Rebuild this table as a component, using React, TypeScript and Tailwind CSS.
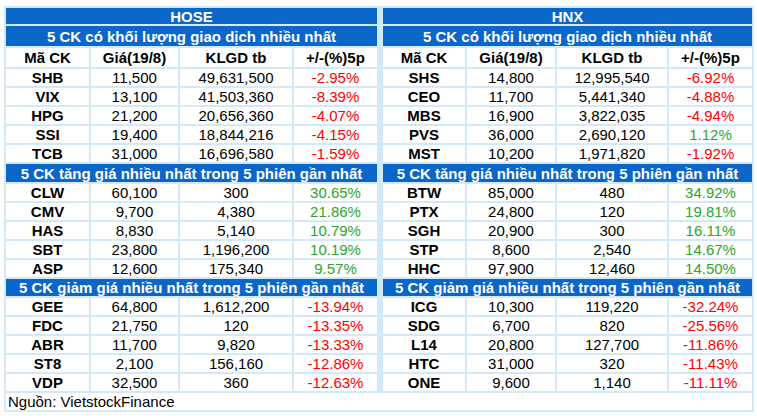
import React from "react";

type Row = [string, string, string, string];

const BLUE = "bg-[#0a66c8]";

const hose = {
  name: "HOSE",
  s1: [
    ["SHB", "11,500", "49,631,500", "-2.95%"],
    ["VIX", "13,100", "41,503,360", "-8.39%"],
    ["HPG", "21,200", "20,656,360", "-4.07%"],
    ["SSI", "19,400", "18,844,216", "-4.15%"],
    ["TCB", "31,000", "16,696,580", "-1.59%"],
  ] as Row[],
  s2: [
    ["CLW", "60,100", "300", "30.65%"],
    ["CMV", "9,700", "4,380", "21.86%"],
    ["HAS", "8,830", "5,140", "10.79%"],
    ["SBT", "23,800", "1,196,200", "10.19%"],
    ["ASP", "12,600", "175,340", "9.57%"],
  ] as Row[],
  s3: [
    ["GEE", "64,800", "1,612,200", "-13.94%"],
    ["FDC", "21,750", "120", "-13.35%"],
    ["ABR", "11,700", "9,820", "-13.33%"],
    ["ST8", "2,100", "156,160", "-12.86%"],
    ["VDP", "32,500", "360", "-12.63%"],
  ] as Row[],
};

const hnx = {
  name: "HNX",
  s1: [
    ["SHS", "14,800", "12,995,540", "-6.92%"],
    ["CEO", "11,700", "5,441,340", "-4.88%"],
    ["MBS", "16,900", "3,822,035", "-4.94%"],
    ["PVS", "36,000", "2,690,120", "1.12%"],
    ["MST", "10,200", "1,971,820", "-1.92%"],
  ] as Row[],
  s2: [
    ["BTW", "85,000", "480", "34.92%"],
    ["PTX", "24,800", "120", "19.81%"],
    ["SGH", "20,900", "300", "16.11%"],
    ["STP", "8,600", "2,540", "14.67%"],
    ["HHC", "97,900", "12,460", "14.50%"],
  ] as Row[],
  s3: [
    ["ICG", "10,300", "119,220", "-32.24%"],
    ["SDG", "6,700", "820", "-25.56%"],
    ["L14", "20,800", "127,700", "-11.86%"],
    ["HTC", "31,000", "320", "-11.43%"],
    ["ONE", "9,600", "1,140", "-11.11%"],
  ] as Row[],
};

function Title({ text, h }: { text: string; h: string }) {
  return (
    <div
      className={`col-span-4 ${BLUE} ${h} flex items-center justify-center text-white font-bold text-[15px] leading-none whitespace-nowrap`}
    >
      {text}
    </div>
  );
}

function DataRows({ rows }: { rows: Row[] }) {
  return (
    <>
      {rows.map((r) => {
        const neg = r[3].startsWith("-");
        return (
          <React.Fragment key={r[0]}>
            <div className="bg-white h-[17px] flex items-center justify-center font-bold text-black text-[15px] leading-none">
              {r[0]}
            </div>
            <div className="bg-white h-[17px] flex items-center justify-center text-black text-[15px] leading-none">
              {r[1]}
            </div>
            <div className="bg-white h-[17px] flex items-center justify-center text-black text-[15px] leading-none">
              {r[2]}
            </div>
            <div
              className={`bg-white h-[17px] flex items-center justify-center text-[15px] leading-none ${
                neg ? "text-[#ff0000]" : "text-[#2ea52e]"
              }`}
            >
              {r[3]}
            </div>
          </React.Fragment>
        );
      })}
    </>
  );
}

function Table({
  data,
  cols,
}: {
  data: typeof hose;
  cols: string;
}) {
  return (
    <div className={`grid ${cols} gap-[2px]`}>
      <div
        className={`col-span-4 ${BLUE} h-[16px] flex items-center justify-center text-white font-bold text-[15px] leading-none`}
      >
        {data.name}
      </div>
      <Title text="5 CK có khối lượng giao dịch nhiều nhất" h="h-[20px]" />
      {["Mã CK", "Giá(19/8)", "KLGD tb", "+/-(%)5p"].map((t) => (
        <div
          key={t}
          className="bg-white h-[19px] flex items-center justify-center font-bold text-black text-[15px] leading-none"
        >
          {t}
        </div>
      ))}
      <DataRows rows={data.s1} />
      <Title text="5 CK tăng giá nhiều nhất trong 5 phiên gần nhất" h="h-[18px]" />
      <DataRows rows={data.s2} />
      <Title text="5 CK giảm giá nhiều nhất trong 5 phiên gần nhất" h="h-[17px]" />
      <DataRows rows={data.s3} />
    </div>
  );
}

export default function App() {
  return (
    <div
      className="w-[757px] h-[416px] bg-white overflow-hidden pt-[6px] pl-[4px]"
      style={{ fontFamily: '"Liberation Sans", Arial, sans-serif' }}
    >
      <div className="w-[750px] bg-[#d2e9fa] p-[2px] flex flex-col gap-[2px]">
        <div className="flex gap-[6px]">
          <div className="w-[371px]">
            <Table data={hose} cols="grid-cols-[83px_87px_112px_83px]" />
          </div>
          <div className="w-[369px]">
            <Table data={hnx} cols="grid-cols-[82px_88px_110px_83px]" />
          </div>
        </div>
        <div className="bg-white h-[17px] flex items-center pl-[2px] text-black text-[15px] leading-none">
          Nguồn: VietstockFinance
        </div>
      </div>
    </div>
  );
}
